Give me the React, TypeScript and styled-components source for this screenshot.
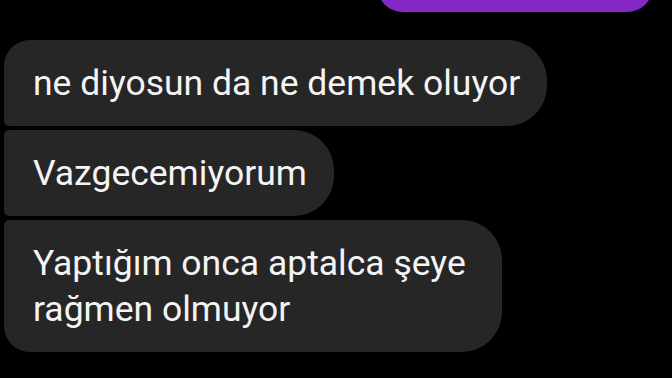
import styled, { createGlobalStyle } from 'styled-components'

const GlobalStyle = createGlobalStyle`
  html, body {
    margin: 0;
    padding: 0;
    background: #000;
  }
  body {
    font-family: Roboto, "Noto Sans", "Liberation Sans", sans-serif;
  }
`

const Thread = styled.div`
  width: 672px;
  height: 378px;
  overflow: hidden;
  display: flex;
  flex-direction: column;
  align-items: flex-start;
  padding-left: 4px;
  box-sizing: border-box;
  background: #000;
`

const Sent = styled.div`
  align-self: flex-end;
  width: 276px;
  height: 52px;
  margin-top: -40px;
  margin-right: 19px;
  margin-bottom: 28px;
  background: #8528c5;
  border-radius: 28px;
`

const Group = styled.div`
  display: flex;
  flex-direction: column;
  align-items: flex-start;
  gap: 4px;
`

type Pos = 'first' | 'middle' | 'last'

const radii: Record<Pos, string> = {
  first: '26px 40px 40px 5px',
  middle: '5px 40px 40px 5px',
  last: '5px 40px 40px 26px',
}

const Bubble = styled.div<{ $pos: Pos; $wrapped?: boolean }>`
  background: #262626;
  color: #f4f4f4;
  font-size: 35.5px;
  line-height: 46px;
  padding: 20px ${p => (p.$wrapped ? '36px' : '27px')} 20px 29px;
  border-radius: ${p => radii[p.$pos]};
  box-sizing: border-box;
`

export default function App() {
  return (
    <>
      <GlobalStyle />
      <Thread>
        <Sent />
        <Group>
          <Bubble $pos="first">ne diyosun da ne demek oluyor</Bubble>
          <Bubble $pos="middle">Vazgecemiyorum</Bubble>
          <Bubble $pos="last" $wrapped>
            Yaptığım onca aptalca şeye
            <br />
            rağmen olmuyor
          </Bubble>
        </Group>
      </Thread>
    </>
  )
}
